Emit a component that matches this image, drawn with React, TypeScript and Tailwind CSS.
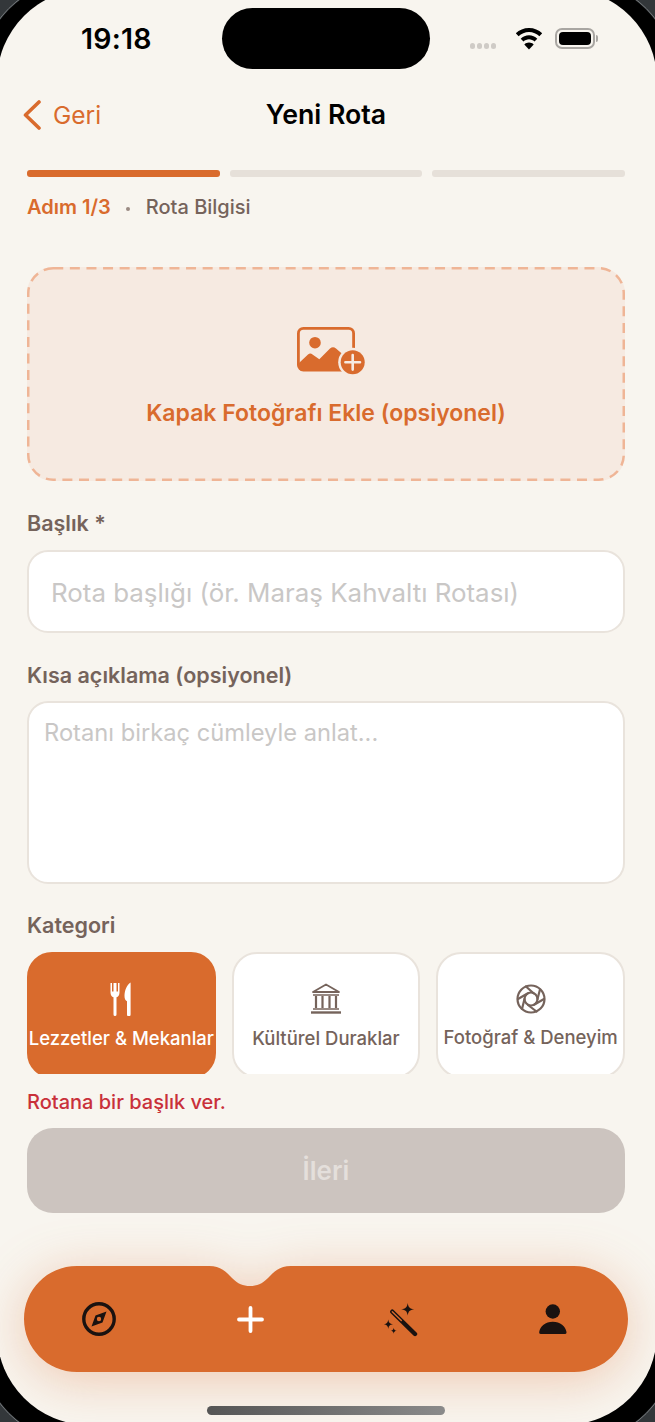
import React from "react";

function ImagePlus() {
  return (
    <svg width="68" height="48" viewBox="0 0 68 48" className="block">
      <rect x="1.400" y="1.400" width="55.200" height="41.600" rx="5" fill="none" stroke="#D96B2D" strokeWidth="2.800" />
      <circle cx="18" cy="15.700" r="5.800" fill="#D96B2D" />
      <path d="M2 36L11 27.500C12.500 26 14 26 15.500 27.500L22.300 32.300L33 21.500C35 19.800 37 19.800 39 21.500L50 31L56 44H6a4 4 0 0 1-4-4z" fill="#D96B2D" />
      <circle cx="55.700" cy="35.300" r="14.500" fill="#F6EAE1" />
      <circle cx="55.700" cy="35.300" r="12" fill="#D96B2D" />
      <path d="M55.700 28v14.600M48.400 35.300h14.600" stroke="#F6EAE1" strokeWidth="2.600" strokeLinecap="round" />
    </svg>
  );
}

function Fork() {
  return (
    <svg width="22" height="34" viewBox="0 0 22 34">
      <path d="M0.500 1v9.500c0 2.800 1.300 4.200 3 4.800v17.200a1.500 1.500 0 0 0 3 0V15.300c1.700-.6 3-2 3-4.800V1H8v8.500H6.500V1H3.500v8.500H2V1z" fill="#fff" />
      <path d="M20.500 0.500c-3.500 2-6 8-6 13.500 0 3 1 4.500 2.500 5.200v13.300a1.800 1.800 0 0 0 3.600 0V1c0-.5-.1-.7-.1-.5z" fill="#fff" />
    </svg>
  );
}

function Museum() {
  return (
    <svg width="32" height="32" viewBox="0 0 32 32" fill="none" stroke="#75635B">
      <path d="M3 9L16 1.500 29 9z" strokeWidth="1.800" strokeLinejoin="round" />
      <path d="M3 12h26M3 26h26" strokeWidth="1.300" />
      <path d="M6 13v12M12.500 13v12M19.500 13v12M26 13v12" strokeWidth="2.200" />
      <path d="M1 29.500h30" strokeWidth="2.400" />
    </svg>
  );
}

function Aperture() {
  return (
    <svg width="30" height="30" viewBox="0 0 30 30" fill="none" stroke="#75635B" strokeWidth="2.200" strokeLinecap="round">
      <circle cx="15" cy="15" r="13.500" />
      <circle cx="15" cy="15" r="6.500" />
      <path d="M10 2.500l7.500 6.800M24 5.500L21.500 15M28 15l-9.500 5.500M20.500 27.500L12 21M6 25L8.500 15M2 15l9.500-5.500" />
    </svg>
  );
}

function Compass() {
  return (
    <svg width="34" height="34" viewBox="0 0 34 34">
      <circle cx="17" cy="17" r="15.200" fill="none" stroke="#1A1210" strokeWidth="3.400" />
      <path fillRule="evenodd" d="M24.500 9.500L20.500 20.500 9.500 24.500 13.500 13.500zM17 14.800a2.200 2.200 0 1 0 0 4.400 2.200 2.200 0 0 0 0-4.400z" fill="#1A1210" />
    </svg>
  );
}

function Wand() {
  return (
    <svg width="34" height="34" viewBox="0 0 34 34">
      <path d="M23.700 0c.6 4.200 2 5.700 6.500 6.300-4.500.6-5.900 2.100-6.500 6.300-.6-4.200-2-5.700-6.500-6.300 4.500-.6 5.900-2.100 6.500-6.300z" fill="#1A1210" />
      <path d="M4.300 16.600c.4 3 1.400 4.300 4.700 4.700-3.300.4-4.300 1.700-4.700 4.700-.4-3-1.400-4.300-4.700-4.700 3.300-.4 4.300-1.700 4.700-4.700zM9.700 24.700c.3 1.900.9 2.700 3 3-2.100.3-2.700 1.100-3 3-.3-1.900-.9-2.700-3-3 2.100-.3 2.700-1.100 3-3z" fill="#1A1210" />
      <path d="M8.300 8.700L31 31" stroke="#1A1210" strokeWidth="4.400" strokeLinecap="round" />
      <path d="M8.300 8.700l9 8.900" stroke="#D96B2D" strokeWidth="1.400" strokeLinecap="round" />
    </svg>
  );
}

function Person() {
  return (
    <svg width="28" height="30" viewBox="0 0 28 30" fill="#1A1210">
      <circle cx="13.800" cy="7.500" r="7.200" />
      <path d="M2 30a1.800 1.800 0 0 1-1.800-2C1 22 6.500 17.700 13.800 17.700S26.700 22 27.500 28a1.800 1.800 0 0 1-1.800 2z" />
    </svg>
  );
}

function Wifi() {
  return (
    <svg width="28" height="22" viewBox="0 0 28 22" fill="#000">
      <path d="M14 0C8.800 0 4.200 2 .8 5.300l2.800 2.900C6.300 5.500 10 3.900 14 3.900s7.700 1.600 10.400 4.300l2.800-2.900C23.800 2 19.200 0 14 0z" />
      <path d="M14 7.300c-3.200 0-6.200 1.300-8.300 3.400l2.800 2.900c1.400-1.400 3.400-2.300 5.500-2.300s4.100.9 5.500 2.300l2.800-2.900C20.200 8.600 17.200 7.300 14 7.300z" />
      <path d="M14 14.500c-1.900 0-3.400.7-4.700 1.900L14 21.500l4.700-5.100C17.400 15.200 15.900 14.500 14 14.500z" />
    </svg>
  );
}

function Category({ active, icon, label, textMt }: { active?: boolean; icon: React.ReactNode; label: string; textMt: string }) {
  return (
    <div className={`min-w-0 h-[126px] rounded-[25px] border-2 flex flex-col items-center pt-[27px] ${active ? "bg-[#D96B2D] border-[#D96B2D] text-white" : "bg-white border-[#E9E3DC] text-[#75635B]"}`}>
      <div className="h-[36px] flex items-center justify-center">{icon}</div>
      <div className={`${textMt} text-[18.500px] leading-[22px] font-medium whitespace-nowrap`}>{label}</div>
    </div>
  );
}

export default function App() {
  return (
    <div className="relative w-[655px] h-[1422px] overflow-hidden bg-[#33373A]" style={{ fontFamily: "Inter, 'Liberation Sans', sans-serif" }}>
      <div className="absolute -inset-[21px] rounded-[100px] border border-[#777B7E]" />
      <div className="absolute -inset-[20px] rounded-[100px] bg-black" />
      <div className="absolute left-[-3px] right-[-2px] top-[-11px] bottom-[-3px] rounded-[92px] bg-[#F8F5EF] overflow-hidden">
        <div className="absolute left-[3px] top-[11px] w-[655px] h-[1422px]">
          <div className="flex flex-col pl-[27px] pr-[30px]">
            {/* Status bar */}
            <div className="relative h-[77px] shrink-0 -ml-[27px] -mr-[30px]">
              <div className="absolute left-[81px] top-[21px] text-[28.500px] leading-[36px] font-semibold text-black tracking-[0.2px]">19:18</div>
              <div className="absolute left-[222px] top-[8px] w-[208px] h-[61px] rounded-[31px] bg-black" />
              <div className="absolute left-[470px] top-[43px] flex gap-[2px]">
                <div className="w-[5px] h-[6px] rounded-full bg-[#CFCBC6]" />
                <div className="w-[5px] h-[6px] rounded-full bg-[#CFCBC6]" />
                <div className="w-[5px] h-[6px] rounded-full bg-[#CFCBC6]" />
                <div className="w-[5px] h-[6px] rounded-full bg-[#CFCBC6]" />
              </div>
              <div className="absolute left-[515px] top-[28px]"><Wifi /></div>
              <div className="absolute left-[555px] top-[28px] w-[40px] h-[21px] rounded-[7px] border-2 border-[#A9A6A2] p-[2px]">
                <div className="w-full h-full rounded-[4px] bg-black" />
              </div>
              <div className="absolute left-[596px] top-[35px] w-[2px] h-[7px] rounded-r-full bg-[#A9A6A2]" />
            </div>

            {/* Header */}
            <div className="relative h-[76px] shrink-0 flex items-center justify-center">
              <div className="absolute left-[-5px] top-[23px] flex items-center gap-[11px]">
                <svg width="20" height="30" viewBox="0 0 20 30" fill="none">
                  <path d="M17 2L3.500 15 17 28" stroke="#D96B2D" strokeWidth="3.600" strokeLinecap="round" strokeLinejoin="round" />
                </svg>
                <span className="text-[24.500px] leading-[30px] text-[#D96B2D]">Geri</span>
              </div>
              <span className="-mt-[2px] text-[26.700px] leading-[32px] font-semibold text-black">Yeni Rota</span>
            </div>

            {/* Progress */}
            <div className="mt-[17px] flex gap-[10px]">
              <div className="flex-1 h-[7px] rounded-[3px] bg-[#D96B2D]" />
              <div className="flex-1 h-[7px] rounded-[3px] bg-[#E6E0D9]" />
              <div className="flex-1 h-[7px] rounded-[3px] bg-[#E6E0D9]" />
            </div>
            <div className="mt-[17px] flex items-center h-[26px] text-[20px] font-medium">
              <span className="text-[#D96B2D] font-semibold">Adım 1/3</span>
              <span className="ml-[15px] mt-[4px] w-[4px] h-[4px] rounded-full bg-[#9A8A82]" />
              <span className="ml-[16px] text-[#75635B]">Rota Bilgisi</span>
            </div>

            {/* Cover */}
            <div className="relative mt-[47px] h-[214px] rounded-[26px] bg-[#F6EAE1] flex flex-col items-center">
              <svg width="598" height="214" viewBox="0 0 598 214" fill="none" className="absolute inset-0">
                <rect x="1.250" y="1.250" width="595.500" height="211.500" rx="25" stroke="#EFB596" strokeWidth="2.500" strokeDasharray="10 6.600" />
              </svg>
              <div className="mt-[60px] ml-[10px]"><ImagePlus /></div>
              <div className="mt-[24px] text-[23px] leading-[28px] font-semibold text-[#D96B2D]">Kapak Fotoğrafı Ekle (opsiyonel)</div>
            </div>

            {/* Title */}
            <div className="mt-[30px] h-[26px] text-[21.500px] leading-[24px] font-semibold text-[#75635B]">Başlık *</div>
            <div className="mt-[13px] h-[83px] rounded-[21px] border-2 border-[#E9E3DC] bg-white flex items-center pl-[22px] pt-[3px]">
              <span className="text-[25.900px] text-[#C9C7C6]">Rota başlığı (ör. Maraş Kahvaltı Rotası)</span>
            </div>

            {/* Description */}
            <div className="mt-[30px] h-[26px] text-[21.500px] leading-[24px] font-semibold text-[#75635B]">Kısa açıklama (opsiyonel)</div>
            <div className="mt-[12px] h-[183px] rounded-[21px] border-2 border-[#E9E3DC] bg-white pl-[15px] pt-[14px]">
              <span className="text-[23.700px] leading-[32px] text-[#C9C7C6]">Rotanı birkaç cümleyle anlat...</span>
            </div>

            {/* Category */}
            <div className="mt-[29px] h-[26px] text-[21.500px] leading-[24px] font-semibold text-[#75635B]">Kategori</div>
            <div className="mt-[13px] h-[122px] overflow-hidden grid grid-cols-3 gap-[16px]">
              <Category active textMt="mt-[10px]" icon={<Fork />} label="Lezzetler & Mekanlar" />
              <Category textMt="mt-[10px]" icon={<Museum />} label="Kültürel Duraklar" />
              <Category textMt="mt-[9px]" icon={<Aperture />} label="Fotoğraf & Deneyim" />
            </div>

            <div className="mt-[15px] h-[26px] text-[20px] leading-[26px] font-medium text-[#C9303A]">Rotana bir başlık ver.</div>
            <div className="mt-[13px] h-[85px] rounded-[26px] bg-[#CCC4BF] flex items-center justify-center text-[26px] font-semibold text-[#E4DFDB]">İleri</div>
          </div>

          {/* Tab bar */}
          <div className="absolute left-[24px] top-[1266px] w-[604px] h-[106px]">
            <svg width="604" height="106" viewBox="0 0 604 106" className="absolute inset-0 overflow-visible">
              <path d="M53 0H185C197 0 202 6 208 12C214 18 219 20 226 20C233 20 238 18 244 12C250 6 255 0 267 0H550C580 0 604 24 604 53C604 82 580 106 550 106H53C23 106 0 82 0 53C0 24 23 0 53 0Z" fill="#D96B2D" style={{ filter: "drop-shadow(0 8px 26px rgba(217,107,45,0.32))" }} />
            </svg>
            <div className="absolute left-[58px] top-[36px]"><Compass /></div>
            <div className="absolute left-[213px] top-[40px]">
              <svg width="27" height="27" viewBox="0 0 27 27"><path d="M13.500 2v23M2 13.500h23" stroke="#fff" strokeWidth="3.800" strokeLinecap="round" /></svg>
            </div>
            <div className="absolute left-[360px] top-[37px]"><Wand /></div>
            <div className="absolute left-[515px] top-[38px]"><Person /></div>
          </div>

          {/* Home indicator */}
          <div className="absolute left-[207px] top-[1406px] w-[238px] h-[9px] rounded-full bg-gradient-to-r from-[#555] to-[#8a8a8a]" />
        </div>
      </div>
    </div>
  );
}
